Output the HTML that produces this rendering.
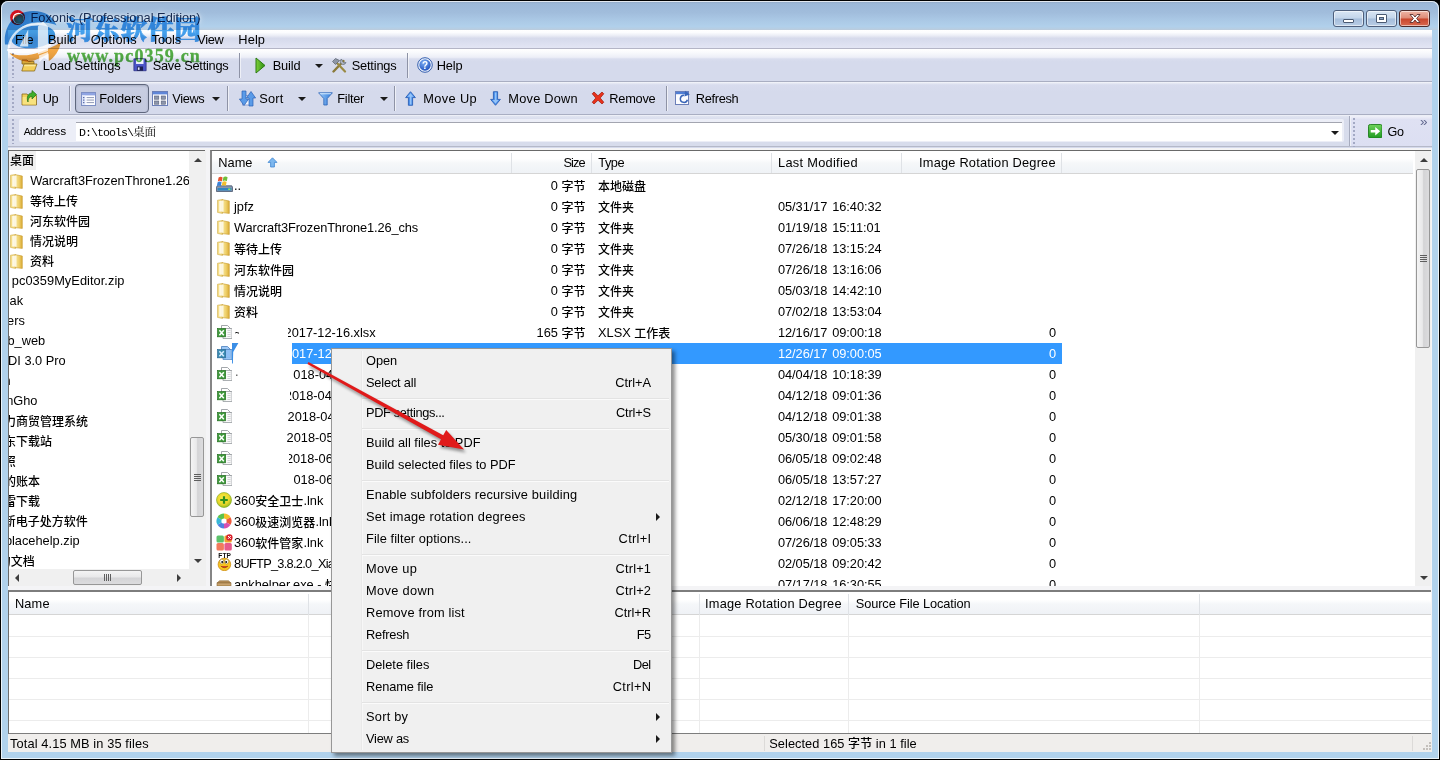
<!DOCTYPE html><html lang="zh"><head><meta charset="utf-8"><title>Foxonic (Professional Edition)</title><style>
*{box-sizing:border-box;margin:0;padding:0}
html,body{width:1440px;height:760px;overflow:hidden;background:#000}
body{position:relative;font-family:"Liberation Sans","Noto Sans CJK SC",sans-serif;font-size:12.8px;color:#000;line-height:1}
.a{position:absolute}
.t{position:absolute;white-space:nowrap;line-height:16px;height:16px}
#win{left:1px;top:1px;width:1438px;height:758px;border-radius:7px 7px 0 0;background:#b1d2ec;overflow:hidden}
#titlebar{left:0;top:0;width:1438px;height:29px;background:linear-gradient(#8fa6c2 0,#94acc9 4%,#9cb8d8 9%,#a1bddc 40%,#aac8e5 65%,#b1d0eb 88%,#b6cee4 95%,#bccbdb 100%)}
#hl{left:0;top:0;width:1438px;height:758px;border-radius:7px 7px 0 0;box-shadow:inset 0 0 0 1px rgba(255,255,255,.75)}
#client{left:7px;top:29px;width:1424px;height:722px;background:#d5daec;overflow:hidden}
.cb{position:absolute;top:10px;height:17px;border:1px solid #4e5f7c;border-radius:3px;box-shadow:inset 0 0 0 1px rgba(255,255,255,.55)}
.cbn{background:linear-gradient(#d9e6f4 0,#c3d5ea 48%,#a5bddb 52%,#b9cee6 100%)}
.cbx{background:linear-gradient(#eeb5a6 0,#de8a76 48%,#c8452c 52%,#d9694f 100%);border-color:#4b2a2a}
#menubar{left:0;top:0;width:1424px;height:19px;background:linear-gradient(#fff 0,#fbfcfe 14%,#eceef6 30%,#dcdfee 42%,#d6daeb 48%,#d9ddee 62%,#e3e5f4 100%);border-bottom:1px solid #b4b5c6}
.tb{position:absolute;left:0;width:1424px;background:linear-gradient(#fff 0,#f8f9fc 12%,#eceef7 26%,#d9ddee 31%,#d5daec 40%,#d5daec 100%)}
.sep{position:absolute;width:1px;background:#8e93a6;box-shadow:1px 0 0 rgba(255,255,255,.6)}
.grip{position:absolute;width:2px;background-image:repeating-linear-gradient(#a3a9c4 0,#a3a9c4 2px,transparent 2px,transparent 4px)}.grip:after{content:"";position:absolute;left:1px;top:1px;width:2px;height:100%;background-image:repeating-linear-gradient(#fff 0,#fff 2px,transparent 2px,transparent 4px);z-index:-1}
.dd{position:absolute;width:0;height:0;border-left:4px solid transparent;border-right:4px solid transparent;border-top:4px solid #1a1a1a}
.pane{position:absolute;background:#fff;overflow:hidden}
.hdr{position:absolute;left:0;top:0;height:22px;background:linear-gradient(#fff 0,#fff 35%,#f5f7f9 55%,#eff2f6 100%);border-bottom:1px solid #d5d5d5}
.hd{position:absolute;top:2px;width:1px;height:20px;background:#dfe2e6}
.row{position:absolute;left:0;height:21px}
.sb{position:absolute;background:#f0f0f0}
.thumb{position:absolute;border:1px solid #979797;border-radius:2px;background:linear-gradient(90deg,#f4f4f4 0,#e9e9ea 45%,#d4d4d6 55%,#dcdcde 100%)}
.thumbh{position:absolute;border:1px solid #979797;border-radius:2px;background:linear-gradient(#f4f4f4 0,#e9e9ea 45%,#d4d4d6 55%,#dcdcde 100%)}
#menu{left:331px;top:348px;width:341px;height:405px;font-size:12.8px;background:#f0f0f0;border:1px solid #979797;box-shadow:3px 3px 4px rgba(0,0,0,.45)}
.mi{position:absolute;left:34px;white-space:nowrap;line-height:16px}
.mk{position:absolute;right:20px;white-space:nowrap;line-height:16px;text-align:right}
.ms{position:absolute;left:30px;right:2px;height:2px;border-top:1px solid #e3e3e3;border-bottom:1px solid #fbfbfb}
.ma{position:absolute;right:11px;width:0;height:0;border-top:4px solid transparent;border-bottom:4px solid transparent;border-left:4px solid #1a1a1a}
.gl{position:absolute;left:0;height:1px;background:#ececec}
.c{font-size:12px;font-weight:500;position:relative;top:.6px}
</style></head><body>
<div id="win" class="a"><div id="titlebar" class="a"></div>
<svg class="a" style="left:8px;top:8px" width="17" height="17" viewBox="0 0 17 17">
<defs><radialGradient id="ig" cx="0.6" cy="0.65" r="0.6"><stop offset="0" stop-color="#3c8f8a"/><stop offset="0.6" stop-color="#7a6a5a"/><stop offset="1" stop-color="#c9482e"/></radialGradient></defs>
<circle cx="8.5" cy="8.5" r="7.4" fill="#d3101f"/><circle cx="9.3" cy="9.3" r="5.6" fill="#fff"/><circle cx="9.8" cy="9.8" r="4.9" fill="url(#ig)"/></svg>
<div class="t" style="left:29.5px;top:9.3px;letter-spacing:0px;font-size:12.8px;color:#15294f;text-shadow:0 0 6px rgba(255,255,255,.9),0 0 3px rgba(255,255,255,.8)">Foxonic (Professional Edition)</div>
<div class="cb cbn" style="left:1332px;width:31px;top:9px"><div class="a" style="left:9px;top:8px;width:11px;height:4px;background:#fff;border:1px solid #4a5a72;border-radius:1px"></div></div>
<div class="cb cbn" style="left:1365px;width:31px;top:9px"><div class="a" style="left:9px;top:3px;width:11px;height:9px;background:#fff;border:1px solid #4a5a72;border-radius:1px"><div class="a" style="left:2px;top:2px;width:5px;height:3px;background:#8ba3c4;border:1px solid #4a5a72"></div></div></div>
<div class="cb cbx" style="left:1398px;width:31px;top:9px"><svg class="a" style="left:8px;top:2px" width="14" height="11" viewBox="0 0 14 11"><path d="M2 1.5 L5 1.5 L7 4 L9 1.5 L12 1.5 L8.6 5.5 L12 9.5 L9 9.5 L7 7 L5 9.5 L2 9.5 L5.4 5.5 Z" fill="#fff" stroke="#5a3030" stroke-width="0.9" stroke-linejoin="round"/></svg></div>
<div id="client" class="a">
<div id="menubar" class="a"></div>
<div class="t" style="top:2px;letter-spacing:-0.708px;left:7px;">File</div>
<div class="t" style="top:2px;letter-spacing:0.059px;left:40px;">Build</div>
<div class="t" style="top:2px;letter-spacing:0.315px;left:82.7px;">Options</div>
<div class="t" style="top:2px;letter-spacing:-0.075px;left:143.7px;">Tools</div>
<div class="t" style="top:2px;letter-spacing:-0.348px;left:189.3px;">View</div>
<div class="t" style="top:2px;letter-spacing:0.125px;left:230.3px;">Help</div>
<div class="tb" style="top:19px;height:33px;border-bottom:1px solid #a9aec2"></div>
<div class="grip" style="left:4px;top:23px;height:25px"></div>
<svg class="a" style="left:13px;top:27px" width="17" height="16" viewBox="0 0 17 16"><path d="M1 3h5l1.5 1.5H13V7H1z" fill="#d9a93a" stroke="#8a6a1c" stroke-width=".8"/><path d="M3 7h13l-2.5 7H0.8z" fill="#f3cf5a" stroke="#8a6a1c" stroke-width=".8"/><path d="M3.6 7.8h11.2l-.5 1.4H3z" fill="#fbe89a"/></svg>
<div class="t" style="top:28px;letter-spacing:-0.023px;left:34.7px;">Load Settings</div>
<svg class="a" style="left:125px;top:28.2px" width="14" height="13.6" viewBox="0 0 16 16" preserveAspectRatio="none"><path d="M1 1h12.5L15 2.5V15H1z" fill="#4b55c8" stroke="#23277a" stroke-width=".8"/><rect x="3.5" y="1.4" width="8.5" height="5.6" fill="#f2f4ff"/><rect x="4.5" y="10" width="7" height="5" fill="#1c1f52"/><rect x="5.5" y="11" width="2" height="3" fill="#dfe3ff"/></svg>
<div class="t" style="top:28px;letter-spacing:-0.248px;left:144.7px;">Save Settings</div>
<div class="sep" style="left:231px;top:23px;height:25px"></div>
<svg class="a" style="left:247px;top:26.5px" width="11" height="17" viewBox="0 0 11 17"><defs><linearGradient id="pg" x1="0" x2="1"><stop offset="0" stop-color="#7ed03a"/><stop offset="1" stop-color="#2b8d12"/></linearGradient></defs><path d="M1 1 L10 8.5 L1 16 Z" fill="url(#pg)" stroke="#2a7a10" stroke-width="1" stroke-linejoin="round"/></svg>
<div class="t" style="top:28px;letter-spacing:-0.116px;left:264.7px;">Build</div>
<div class="dd" style="left:307px;top:34px"></div>
<svg class="a" style="left:323px;top:27px" width="17" height="16" viewBox="0 0 17 16"><path d="M2.5 14.5 L12.5 4" stroke="#8a7a3a" stroke-width="2.4" stroke-linecap="round"/><path d="M14 14.5 L5 5" stroke="#9a8a44" stroke-width="2.2" stroke-linecap="round"/><path d="M1.5 4.5 L4.5 1.5 L8.5 3.5 L4.5 7.5 Z" fill="#8d96a6" stroke="#59606c" stroke-width=".7"/><path d="M10.5 2 a3 3 0 1 0 4.5 3.5 l-2 .3 -1.4 -1.4z" fill="#aeb6c4" stroke="#5c6470" stroke-width=".7"/></svg>
<div class="t" style="top:28px;letter-spacing:-0.179px;left:343.7px;">Settings</div>
<div class="sep" style="left:399px;top:23px;height:25px"></div>
<svg class="a" style="left:408.5px;top:27px" width="16" height="16" viewBox="0 0 16 16"><defs><radialGradient id="hg" cx=".4" cy=".3" r=".8"><stop offset="0" stop-color="#7fb1f5"/><stop offset="1" stop-color="#1748b8"/></radialGradient></defs><circle cx="8" cy="8" r="7.3" fill="#eef3fb" stroke="#355fae" stroke-width="1"/><circle cx="8" cy="8" r="5.7" fill="url(#hg)"/><text x="8" y="11.6" font-family="Liberation Sans,sans-serif" font-weight="bold" font-size="10" text-anchor="middle" fill="#fff">?</text></svg>
<div class="t" style="top:28px;letter-spacing:-0.108px;left:428.7px;">Help</div>
<div class="tb" style="top:52px;height:33px;border-bottom:1px solid #a9aec2;background:linear-gradient(#f6f7fb 0,#e6e9f4 4%,#d8dcee 9%,#d5daec 30%,#d5daec 100%)"></div>
<div class="grip" style="left:4px;top:56px;height:25px"></div>
<svg class="a" style="left:13px;top:60px" width="17" height="16" viewBox="0 0 17 16"><path d="M1 4h5l1.5 1.5H15.5V15H1z" fill="#f1cf5a" stroke="#8a6a1c" stroke-width=".8"/><path d="M1.6 7h13.4v7.4H1.6z" fill="#f8e27e"/><path d="M7 12 C7 8 9 6.5 11 6.5 L11 9 L15.5 4.5 L11 0.5 L11 3 C7.5 3 5 6.5 7 12z" fill="#3fae2a" stroke="#1f6e12" stroke-width=".7"/></svg>
<div class="t" style="top:60.7px;letter-spacing:-0.363px;left:34.7px;">Up</div>
<div class="sep" style="left:61px;top:56px;height:25px"></div>
<div class="a" style="left:67px;top:54px;width:74px;height:29px;border:1px solid #5f677d;border-radius:4px;background:linear-gradient(#c9cee2 0,#c3c9de 100%);box-shadow:inset 0 1px 2px rgba(60,70,100,.25)"></div>
<svg class="a" style="left:73px;top:61.5px" width="15" height="14" viewBox="0 0 15 14"><rect x=".5" y=".5" width="14" height="13" fill="#fdfdff" stroke="#7d8fc4"/><rect x="1" y="1" width="13" height="2.4" fill="#8fa4e2"/><rect x="1" y="3.4" width="3.4" height="9.6" fill="#dfe6fa"/><g fill="#5b6da8"><rect x="2" y="5" width="1.4" height="1.2"/><rect x="2" y="7.5" width="1.4" height="1.2"/><rect x="2" y="10" width="1.4" height="1.2"/></g><g fill="#9aa3bd"><rect x="5.6" y="5" width="7.4" height="1.1"/><rect x="5.6" y="7.5" width="7.4" height="1.1"/><rect x="5.6" y="10" width="7.4" height="1.1"/></g></svg>
<div class="t" style="top:61.2px;letter-spacing:-0.047px;left:91.3px;">Folders</div>
<svg class="a" style="left:144px;top:60.5px" width="16" height="15" viewBox="0 0 16 15"><rect x=".5" y=".5" width="15" height="14" fill="#fdfdff" stroke="#6b7fb8"/><rect x="1" y="1" width="14" height="2.4" fill="#5f86d8"/><g fill="#8e97ad" stroke="#555d75" stroke-width=".6"><rect x="2.6" y="5" width="4.2" height="3.2"/><rect x="9.2" y="5" width="4.2" height="3.2"/><rect x="2.6" y="10" width="4.2" height="3.2"/><rect x="9.2" y="10" width="4.2" height="3.2"/></g></svg>
<div class="t" style="top:60.7px;letter-spacing:-0.361px;left:164.3px;">Views</div>
<div class="dd" style="left:203.5px;top:67px"></div>
<div class="sep" style="left:218.5px;top:56px;height:25px"></div>
<svg class="a" style="left:230.5px;top:59.5px" width="17" height="17" viewBox="0 0 17 17"><rect x="3.5" y="5.5" width="10" height="9.5" fill="#f4f7fd" stroke="#7f93c8" stroke-width=".8"/><path d="M3 1h4v8h2.6L5 15.5 0.4 9H3z" fill="#5a9be8" stroke="#2a5fb4" stroke-width=".7"/><path d="M10 16v-8H7.4L12 1.5 16.6 8H14v8z" fill="#5a9be8" stroke="#2a5fb4" stroke-width=".7"/></svg>
<div class="t" style="top:60.7px;letter-spacing:0.175px;left:251.3px;">Sort</div>
<div class="dd" style="left:289.5px;top:67px"></div>
<svg class="a" style="left:310px;top:61.5px" width="15" height="14" viewBox="0 0 15 14"><defs><linearGradient id="fg" x1="0" x2="1"><stop offset="0" stop-color="#9ccaf8"/><stop offset="1" stop-color="#2e78d8"/></linearGradient></defs><path d="M.6 .8h13.8L9.2 6.6V13H5.8V6.6z" fill="url(#fg)" stroke="#2a63b8" stroke-width=".8" stroke-linejoin="round"/><path d="M1.5 1.3h12l-1 1H2.5z" fill="#d9ecff"/></svg>
<div class="t" style="top:60.7px;letter-spacing:-0.289px;left:329.3px;">Filter</div>
<div class="dd" style="left:372px;top:67px"></div>
<div class="sep" style="left:386px;top:56px;height:25px"></div>
<svg class="a" style="left:396.5px;top:60.5px" width="11" height="15" viewBox="0 0 11 15"><path d="M5.5 .7 L10.4 6.6 H7.6 V14.3 H3.4 V6.6 H.6 Z" fill="#4f94ec" stroke="#1f55b0" stroke-width=".8" stroke-linejoin="round"/><path d="M5.5 2.2 L8.4 5.8 H6.4 V13.4 H5 V5.8 H2.6z" fill="#a8d0fb" opacity=".8"/></svg>
<div class="t" style="top:60.7px;letter-spacing:0.363px;left:415.3px;">Move Up</div>
<svg class="a" style="left:482px;top:60.5px" width="11" height="15" viewBox="0 0 11 15"><path d="M5.5 14.3 L10.4 8.4 H7.6 V.7 H3.4 V8.4 H.6 Z" fill="#4f94ec" stroke="#1f55b0" stroke-width=".8" stroke-linejoin="round"/><path d="M5 1.5 H6.4 V9 H8.4 L5.5 12.6 2.6 9 H5z" fill="#a8d0fb" opacity=".8"/></svg>
<div class="t" style="top:60.7px;letter-spacing:0.227px;left:500.3px;">Move Down</div>
<svg class="a" style="left:583px;top:61px" width="14" height="14" viewBox="0 0 14 14"><path d="M1.2 2.8 L3 1 L7 4.8 L11 1 L12.8 2.8 L9.2 7 L12.8 11.2 L11 13 L7 9.2 L3 13 L1.2 11.2 L4.8 7 Z" fill="#e8321c" stroke="#a01808" stroke-width=".7" stroke-linejoin="round"/></svg>
<div class="t" style="top:60.7px;letter-spacing:-0.253px;left:601.3px;">Remove</div>
<div class="sep" style="left:658px;top:56px;height:25px"></div>
<svg class="a" style="left:667px;top:60px" width="16" height="15" viewBox="0 0 16 15"><rect x=".5" y="1.5" width="13" height="13" fill="#fdfdff" stroke="#6b7fb8"/><rect x="1" y="2" width="12" height="2.2" fill="#4f7ed4"/><path d="M9 5.2 a3.6 3.6 0 1 0 3.4 4.6" fill="none" stroke="#3a66b8" stroke-width="1.5"/><path d="M10 .8 L14.8 4.4 L9.4 6.4z" fill="#3a66b8"/></svg>
<div class="t" style="top:60.7px;letter-spacing:-0.303px;left:687.7px;">Refresh</div>
<div class="tb" style="top:85px;height:32px;border-bottom:1px solid #b5b9c9;background:linear-gradient(#f4f5fa 0,#dfe3f0 5%,#d8dcec 14%,#d7dcec 100%)"></div>
<div class="grip" style="left:4px;top:89px;height:25px"></div>
<div class="a" style="left:11px;top:89.3px;width:1324.5px;height:23.2px;background:#eceef7;border-radius:2px"></div>
<div class="a" style="left:68px;top:92px;width:1266px;height:19.2px;background:#fff;border-top:1px solid #a3a5b0"></div>
<div class="sep" style="left:1341px;top:86px;height:30px;background:#a6abbe"></div>
<div class="t" style="left:15.8px;top:94.3px;font-family:'Liberation Mono','Noto Sans CJK SC',monospace;font-size:11.6px;letter-spacing:-0.96px;">Address</div>
<div class="t" style="left:71px;top:93px;font-family:'Liberation Mono','Noto Sans CJK SC',monospace;font-size:11.6px;letter-spacing:-0.96px;">D:\tools\<span style="letter-spacing:0;font-family:'Noto Serif CJK SC',serif">桌面</span></div>
<div class="dd" style="left:1322.7px;top:101px"></div>
<div class="a" style="left:1343px;top:86px;width:81px;height:30px;background:linear-gradient(#f0f1f9 0,#dfe1f3 12%,#dcdff2 100%)"></div>
<div class="grip" style="left:1345px;top:87.5px;height:29px"></div>
<svg class="a" style="left:1359.8px;top:93.8px" width="14.5" height="14.5" viewBox="0 0 16 16"><defs><linearGradient id="gg" x1="0" y1="0" x2="0" y2="1"><stop offset="0" stop-color="#6fd35a"/><stop offset="1" stop-color="#1f9a22"/></linearGradient></defs><rect x=".5" y=".5" width="15" height="15" rx="2" fill="url(#gg)" stroke="#1d7a1c"/><path d="M3 6.6h5V3.4L13.4 8 8 12.6V9.4H3z" fill="#fff"/></svg>
<div class="t" style="top:94px;font-size:12.6px;letter-spacing:-0.208px;left:1379.5px;">Go</div>
<div class="t" style="left:1412px;top:84px;font-size:13.5px;color:#62688f;letter-spacing:-1px">»</div>
<div class="a" style="left:0;top:118px;width:1424px;height:604px;background:#f4f4f6"></div>
<div class="pane" style="left:0px;top:120px;width:197px;height:436px;border-top:1px solid #6a6a6a;border-left:1px solid #6a6a6a">
<div class="a" style="left:0px;top:0px;width:27px;height:19px;background:#f0f0f0"></div>
<div class="t" style="top:1.5px;left:1px;"><span class="c">桌面</span></div>
<svg class="a" style="left:0.8px;top:22.5px" width="13" height="15" viewBox="0 0 13 15"><defs><linearGradient id="fo1" x1="0" x2="1"><stop offset="0" stop-color="#f7e7a2"/><stop offset=".55" stop-color="#efd06a"/><stop offset="1" stop-color="#d9aa35"/></linearGradient></defs><path d="M.5 1.2 L5.5 .5 V14.5 L.5 13.4z" fill="#f4dc86" stroke="#d2b04e" stroke-width=".6"/><path d="M5 .6 L12.3 2 V14.4 L5 13.6z" fill="url(#fo1)" stroke="#c79a2e" stroke-width=".6"/><path d="M2.2 2 L6.5 1.4 V12.8 L2.2 12.4z" fill="#fffdf2" opacity=".85"/></svg>
<div class="t" style="top:22.0px;letter-spacing:-0.022px;left:21.2px;">Warcraft3FrozenThrone1.26_chs</div>
<svg class="a" style="left:0.8px;top:42.5px" width="13" height="15" viewBox="0 0 13 15"><defs><linearGradient id="fo2" x1="0" x2="1"><stop offset="0" stop-color="#f7e7a2"/><stop offset=".55" stop-color="#efd06a"/><stop offset="1" stop-color="#d9aa35"/></linearGradient></defs><path d="M.5 1.2 L5.5 .5 V14.5 L.5 13.4z" fill="#f4dc86" stroke="#d2b04e" stroke-width=".6"/><path d="M5 .6 L12.3 2 V14.4 L5 13.6z" fill="url(#fo2)" stroke="#c79a2e" stroke-width=".6"/><path d="M2.2 2 L6.5 1.4 V12.8 L2.2 12.4z" fill="#fffdf2" opacity=".85"/></svg>
<div class="t" style="top:42.0px;left:21px;"><span class="c">等待上传</span></div>
<svg class="a" style="left:0.8px;top:62.5px" width="13" height="15" viewBox="0 0 13 15"><defs><linearGradient id="fo3" x1="0" x2="1"><stop offset="0" stop-color="#f7e7a2"/><stop offset=".55" stop-color="#efd06a"/><stop offset="1" stop-color="#d9aa35"/></linearGradient></defs><path d="M.5 1.2 L5.5 .5 V14.5 L.5 13.4z" fill="#f4dc86" stroke="#d2b04e" stroke-width=".6"/><path d="M5 .6 L12.3 2 V14.4 L5 13.6z" fill="url(#fo3)" stroke="#c79a2e" stroke-width=".6"/><path d="M2.2 2 L6.5 1.4 V12.8 L2.2 12.4z" fill="#fffdf2" opacity=".85"/></svg>
<div class="t" style="top:62.0px;left:21px;"><span class="c">河东软件园</span></div>
<svg class="a" style="left:0.8px;top:82.5px" width="13" height="15" viewBox="0 0 13 15"><defs><linearGradient id="fo4" x1="0" x2="1"><stop offset="0" stop-color="#f7e7a2"/><stop offset=".55" stop-color="#efd06a"/><stop offset="1" stop-color="#d9aa35"/></linearGradient></defs><path d="M.5 1.2 L5.5 .5 V14.5 L.5 13.4z" fill="#f4dc86" stroke="#d2b04e" stroke-width=".6"/><path d="M5 .6 L12.3 2 V14.4 L5 13.6z" fill="url(#fo4)" stroke="#c79a2e" stroke-width=".6"/><path d="M2.2 2 L6.5 1.4 V12.8 L2.2 12.4z" fill="#fffdf2" opacity=".85"/></svg>
<div class="t" style="top:82.0px;left:21px;"><span class="c">情况说明</span></div>
<svg class="a" style="left:0.8px;top:102.5px" width="13" height="15" viewBox="0 0 13 15"><defs><linearGradient id="fo5" x1="0" x2="1"><stop offset="0" stop-color="#f7e7a2"/><stop offset=".55" stop-color="#efd06a"/><stop offset="1" stop-color="#d9aa35"/></linearGradient></defs><path d="M.5 1.2 L5.5 .5 V14.5 L.5 13.4z" fill="#f4dc86" stroke="#d2b04e" stroke-width=".6"/><path d="M5 .6 L12.3 2 V14.4 L5 13.6z" fill="url(#fo5)" stroke="#c79a2e" stroke-width=".6"/><path d="M2.2 2 L6.5 1.4 V12.8 L2.2 12.4z" fill="#fffdf2" opacity=".85"/></svg>
<div class="t" style="top:102.0px;left:21px;"><span class="c">资料</span></div>
<div class="t" style="top:122.0px;letter-spacing:0.058px;left:2.8px;">pc0359MyEditor.zip</div>
<div class="t" style="top:142.0px;right:181.9px;text-align:right;">bak</div>
<div class="t" style="top:162.0px;right:180.2px;text-align:right;">Users</div>
<div class="t" style="top:182.0px;right:159.8px;text-align:right;">web_web</div>
<div class="t" style="top:202.0px;right:139.3px;text-align:right;">MIDI 3.0 Pro</div>
<div class="t" style="top:222.0px;right:194.5px;text-align:right;">bin</div>
<div class="t" style="top:242.0px;right:167.5px;text-align:right;">WinGho</div>
<div class="t" style="top:262.0px;right:117px;text-align:right;"><span class="c">智力商贸管理系统</span></div>
<div class="t" style="top:282.0px;right:153px;text-align:right;"><span class="c">河东下载站</span></div>
<div class="t" style="top:302.0px;right:189.2px;text-align:right;"><span class="c">证照</span></div>
<div class="t" style="top:322.0px;right:164.9px;text-align:right;"><span class="c">我的账本</span></div>
<div class="t" style="top:342.0px;right:164.9px;text-align:right;"><span class="c">迅雷下载</span></div>
<div class="t" style="top:362.0px;right:117.2px;text-align:right;"><span class="c">易新电子处方软件</span></div>
<div class="t" style="top:382.0px;right:125.4px;text-align:right;">replacehelp.zip</div>
<div class="t" style="top:402.0px;right:170.3px;text-align:right;"><span class="c">我的文档</span></div>
</div>
<div class="sb" style="left:181px;top:121px;width:16.5px;height:418px"><div class="a" style="left:5px;top:7px;width:0;height:0;border-left:4px solid transparent;border-right:4px solid transparent;border-bottom:4px solid #3d3d3d"></div><div class="a" style="left:5px;top:408px;width:0;height:0;border-left:4px solid transparent;border-right:4px solid transparent;border-top:4px solid #3d3d3d"></div><div class="thumb" style="left:1px;top:286px;width:14.0px;height:80px"></div><div class="a" style="left:5px;top:322.5px;width:7px;height:1px;background:#5e5e5e"></div><div class="a" style="left:5px;top:324.5px;width:7px;height:1px;background:#5e5e5e"></div><div class="a" style="left:5px;top:326.5px;width:7px;height:1px;background:#5e5e5e"></div><div class="a" style="left:5px;top:328.5px;width:7px;height:1px;background:#5e5e5e"></div></div>
<div class="sb" style="left:1px;top:539px;width:180px;height:17px">
<div class="a" style="left:6px;top:5px;width:0;height:0;border-top:4px solid transparent;border-bottom:4px solid transparent;border-right:4px solid #3d3d3d"></div>
<div class="a" style="left:168px;top:5px;width:0;height:0;border-top:4px solid transparent;border-bottom:4px solid transparent;border-left:4px solid #3d3d3d"></div>
<div class="thumbh" style="left:64px;top:1px;width:69px;height:15px"></div>
<div class="a" style="left:95px;top:5px;width:1px;height:7px;background:#5e5e5e"></div>
<div class="a" style="left:97px;top:5px;width:1px;height:7px;background:#5e5e5e"></div>
<div class="a" style="left:99px;top:5px;width:1px;height:7px;background:#5e5e5e"></div>
<div class="a" style="left:101px;top:5px;width:1px;height:7px;background:#5e5e5e"></div>
</div>
<div class="sb" style="left:181px;top:539px;width:16.5px;height:17px"></div>
<div class="pane" style="left:202px;top:120px;width:1221px;height:436px;border-top:1px solid #6a6a6a;border-left:2px solid #858585">
<div class="hdr" style="width:1201px;height:23px"></div>
<div class="hd" style="left:298.6px"></div>
<div class="hd" style="left:379.2px"></div>
<div class="hd" style="left:559px"></div>
<div class="hd" style="left:689px"></div>
<div class="hd" style="left:849px"></div>
<div class="t" style="top:4px;letter-spacing:0.019px;left:6.3px;">Name</div>
<svg class="a" style="left:55px;top:6px" width="11" height="11" viewBox="0 0 11 11"><path d="M5.5 .8 L10 5.4 H7.4 V10 H3.6 V5.4 H1 Z" fill="#7db7ee" stroke="#3f86d2" stroke-width=".8" stroke-linejoin="round"/></svg>
<div class="t" style="top:4px;letter-spacing:-0.967px;left:351.5px;">Size</div>
<div class="t" style="top:4px;letter-spacing:-0.485px;left:386.3px;">Type</div>
<div class="t" style="top:4px;letter-spacing:0.289px;left:566px;">Last Modified</div>
<div class="t" style="top:4px;letter-spacing:0.213px;left:707px;">Image Rotation Degree</div>
<svg class="a" style="left:3.5px;top:25.4px" width="17" height="17" viewBox="0 0 17 17"><path d="M1.2 9.8h14.6l.7 1.4v4.3H.5v-4.3z" fill="#8696ae" stroke="#4a5870" stroke-width=".8"/><rect x="1.6" y="12" width="13.8" height="2.6" rx=".6" fill="#2f86c0"/><rect x="12.2" y="12.5" width="2.2" height="1.5" fill="#8aea5a"/><path d="M2.6 1.4 q2 -1.3 4 0 l-.8 4 q-2 -1.3 -4 0z" fill="#e8502c"/><path d="M7.4 1.2 q2 -1.5 4.2 0 l-.8 4 q-2.2 -1.5 -4.2 0z" fill="#6fbf3a"/><path d="M1.6 6.2 q2 -1.3 4 0 l-.8 4 q-2 -1.3 -4 0z" fill="#3a82d8"/><path d="M6.4 6 q2 -1.5 4.2 0 l-.8 4 q-2.2 -1.5 -4.2 0z" fill="#f2c02e"/></svg>
<div class="t" style="top:27px;left:22px;">..</div>
<div class="t" style="top:27px;right:845.5px;text-align:right;">0 <span class="c">字节</span></div>
<div class="t" style="top:27px;left:386px;"><span class="c">本地磁盘</span></div>
<svg class="a" style="left:5px;top:47.7px" width="13" height="15" viewBox="0 0 13 15"><defs><linearGradient id="fo6" x1="0" x2="1"><stop offset="0" stop-color="#f7e7a2"/><stop offset=".55" stop-color="#efd06a"/><stop offset="1" stop-color="#d9aa35"/></linearGradient></defs><path d="M.5 1.2 L5.5 .5 V14.5 L.5 13.4z" fill="#f4dc86" stroke="#d2b04e" stroke-width=".6"/><path d="M5 .6 L12.3 2 V14.4 L5 13.6z" fill="url(#fo6)" stroke="#c79a2e" stroke-width=".6"/><path d="M2.2 2 L6.5 1.4 V12.8 L2.2 12.4z" fill="#fffdf2" opacity=".85"/></svg>
<div class="t" style="top:48px;left:22px;">jpfz</div>
<div class="t" style="top:48px;right:845.5px;text-align:right;">0 <span class="c">字节</span></div>
<div class="t" style="top:48px;left:386px;"><span class="c">文件夹</span></div>
<div class="t" style="top:48px;letter-spacing:-0.069px;left:566px;word-spacing:1.5px;">05/31/17 16:40:32</div>
<svg class="a" style="left:5px;top:68.7px" width="13" height="15" viewBox="0 0 13 15"><defs><linearGradient id="fo7" x1="0" x2="1"><stop offset="0" stop-color="#f7e7a2"/><stop offset=".55" stop-color="#efd06a"/><stop offset="1" stop-color="#d9aa35"/></linearGradient></defs><path d="M.5 1.2 L5.5 .5 V14.5 L.5 13.4z" fill="#f4dc86" stroke="#d2b04e" stroke-width=".6"/><path d="M5 .6 L12.3 2 V14.4 L5 13.6z" fill="url(#fo7)" stroke="#c79a2e" stroke-width=".6"/><path d="M2.2 2 L6.5 1.4 V12.8 L2.2 12.4z" fill="#fffdf2" opacity=".85"/></svg>
<div class="t" style="top:69px;letter-spacing:-0.111px;left:22px;">Warcraft3FrozenThrone1.26_chs</div>
<div class="t" style="top:69px;right:845.5px;text-align:right;">0 <span class="c">字节</span></div>
<div class="t" style="top:69px;left:386px;"><span class="c">文件夹</span></div>
<div class="t" style="top:69px;letter-spacing:-0.069px;left:566px;word-spacing:1.5px;">01/19/18 15:11:01</div>
<svg class="a" style="left:5px;top:89.7px" width="13" height="15" viewBox="0 0 13 15"><defs><linearGradient id="fo8" x1="0" x2="1"><stop offset="0" stop-color="#f7e7a2"/><stop offset=".55" stop-color="#efd06a"/><stop offset="1" stop-color="#d9aa35"/></linearGradient></defs><path d="M.5 1.2 L5.5 .5 V14.5 L.5 13.4z" fill="#f4dc86" stroke="#d2b04e" stroke-width=".6"/><path d="M5 .6 L12.3 2 V14.4 L5 13.6z" fill="url(#fo8)" stroke="#c79a2e" stroke-width=".6"/><path d="M2.2 2 L6.5 1.4 V12.8 L2.2 12.4z" fill="#fffdf2" opacity=".85"/></svg>
<div class="t" style="top:90px;left:22px;"><span class="c">等待上传</span></div>
<div class="t" style="top:90px;right:845.5px;text-align:right;">0 <span class="c">字节</span></div>
<div class="t" style="top:90px;left:386px;"><span class="c">文件夹</span></div>
<div class="t" style="top:90px;letter-spacing:-0.069px;left:566px;word-spacing:1.5px;">07/26/18 13:15:24</div>
<svg class="a" style="left:5px;top:110.7px" width="13" height="15" viewBox="0 0 13 15"><defs><linearGradient id="fo9" x1="0" x2="1"><stop offset="0" stop-color="#f7e7a2"/><stop offset=".55" stop-color="#efd06a"/><stop offset="1" stop-color="#d9aa35"/></linearGradient></defs><path d="M.5 1.2 L5.5 .5 V14.5 L.5 13.4z" fill="#f4dc86" stroke="#d2b04e" stroke-width=".6"/><path d="M5 .6 L12.3 2 V14.4 L5 13.6z" fill="url(#fo9)" stroke="#c79a2e" stroke-width=".6"/><path d="M2.2 2 L6.5 1.4 V12.8 L2.2 12.4z" fill="#fffdf2" opacity=".85"/></svg>
<div class="t" style="top:111px;left:22px;"><span class="c">河东软件园</span></div>
<div class="t" style="top:111px;right:845.5px;text-align:right;">0 <span class="c">字节</span></div>
<div class="t" style="top:111px;left:386px;"><span class="c">文件夹</span></div>
<div class="t" style="top:111px;letter-spacing:-0.069px;left:566px;word-spacing:1.5px;">07/26/18 13:16:06</div>
<svg class="a" style="left:5px;top:131.7px" width="13" height="15" viewBox="0 0 13 15"><defs><linearGradient id="fo10" x1="0" x2="1"><stop offset="0" stop-color="#f7e7a2"/><stop offset=".55" stop-color="#efd06a"/><stop offset="1" stop-color="#d9aa35"/></linearGradient></defs><path d="M.5 1.2 L5.5 .5 V14.5 L.5 13.4z" fill="#f4dc86" stroke="#d2b04e" stroke-width=".6"/><path d="M5 .6 L12.3 2 V14.4 L5 13.6z" fill="url(#fo10)" stroke="#c79a2e" stroke-width=".6"/><path d="M2.2 2 L6.5 1.4 V12.8 L2.2 12.4z" fill="#fffdf2" opacity=".85"/></svg>
<div class="t" style="top:132px;left:22px;"><span class="c">情况说明</span></div>
<div class="t" style="top:132px;right:845.5px;text-align:right;">0 <span class="c">字节</span></div>
<div class="t" style="top:132px;left:386px;"><span class="c">文件夹</span></div>
<div class="t" style="top:132px;letter-spacing:-0.069px;left:566px;word-spacing:1.5px;">05/03/18 14:42:10</div>
<svg class="a" style="left:5px;top:152.7px" width="13" height="15" viewBox="0 0 13 15"><defs><linearGradient id="fo11" x1="0" x2="1"><stop offset="0" stop-color="#f7e7a2"/><stop offset=".55" stop-color="#efd06a"/><stop offset="1" stop-color="#d9aa35"/></linearGradient></defs><path d="M.5 1.2 L5.5 .5 V14.5 L.5 13.4z" fill="#f4dc86" stroke="#d2b04e" stroke-width=".6"/><path d="M5 .6 L12.3 2 V14.4 L5 13.6z" fill="url(#fo11)" stroke="#c79a2e" stroke-width=".6"/><path d="M2.2 2 L6.5 1.4 V12.8 L2.2 12.4z" fill="#fffdf2" opacity=".85"/></svg>
<div class="t" style="top:153px;left:22px;"><span class="c">资料</span></div>
<div class="t" style="top:153px;right:845.5px;text-align:right;">0 <span class="c">字节</span></div>
<div class="t" style="top:153px;left:386px;"><span class="c">文件夹</span></div>
<div class="t" style="top:153px;letter-spacing:-0.069px;left:566px;word-spacing:1.5px;">07/02/18 13:53:04</div>
<svg class="a" style="left:4.5px;top:173.5px" width="15" height="15" viewBox="0 0 15 15"><path d="M4.5 .5h6l3 3V11.5h-9z" fill="#fff" stroke="#8c9196" stroke-width=".8"/><path d="M6 3.5h9v10H6z" fill="#fbfbfb" stroke="#8c9196" stroke-width=".8" opacity=".9"/><g stroke="#b8bcc0" stroke-width=".6"><path d="M10.5 5.5h3M10.5 7.5h3M10.5 9.5h3M10.5 11.5h3"/></g><rect x=".6" y="3.6" width="8" height="8.2" fill="#3f9a3c" stroke="#23701f" stroke-width=".7"/><path d="M2.4 5.3 L6.8 10.2 M6.8 5.3 L2.4 10.2" stroke="#fff" stroke-width="1.5"/></svg>
<div class="t" style="top:174px;left:22.5px;">~</div>
<div class="t" style="top:174px;left:72.6px;">2017-12-16.xlsx</div>
<div class="a" style="left:27px;top:171px;width:49px;height:20px;background:#fff"></div>
<div class="t" style="top:174px;right:845.5px;text-align:right;">165 <span class="c">字节</span></div>
<div class="t" style="top:174px;left:386px;">XLSX <span class="c">工作表</span></div>
<div class="t" style="top:174px;letter-spacing:-0.069px;left:566px;word-spacing:1.5px;">12/16/17 09:00:18</div>
<div class="t" style="top:174px;right:375px;text-align:right;">0</div>
<div class="a" style="left:20px;top:192px;width:829.5px;height:20.5px;background:#3399ff"></div>
<svg class="a" style="left:4.5px;top:194.5px" width="15" height="15" viewBox="0 0 15 15"><path d="M4.5 .5h6l3 3V11.5h-9z" fill="#9ec9f7" stroke="#4a7fbe" stroke-width=".8"/><path d="M6 3.5h9v10H6z" fill="#8fc0f5" stroke="#4a7fbe" stroke-width=".8" opacity=".9"/><rect x=".6" y="3.6" width="8" height="8.2" fill="#3a8bb0" stroke="#2a6a96" stroke-width=".7"/><path d="M2.4 5.3 L6.8 10.2 M6.8 5.3 L2.4 10.2" stroke="#d7ecff" stroke-width="1.5"/></svg>
<div class="t" style="top:195px;color:#fff;left:72.8px;">2017-12-26.xlsx</div>
<div class="a" style="left:26px;top:192px;width:53.5px;height:21px;background:#fff"></div>
<svg class="a" style="left:20px;top:192px" width="7" height="21" viewBox="0 0 7 21"><path d="M0 0H7V21H0z" fill="#fff"/><path d="M0 0 H6.4 L1.2 9 L.9 20.5 H0z" fill="#3a8ee6"/></svg>
<div class="t" style="top:195px;color:#fff;letter-spacing:-0.069px;left:566px;word-spacing:1.5px;">12/26/17 09:00:05</div>
<div class="t" style="top:195px;color:#fff;right:375px;text-align:right;">0</div>
<svg class="a" style="left:4.5px;top:215.5px" width="15" height="15" viewBox="0 0 15 15"><path d="M4.5 .5h6l3 3V11.5h-9z" fill="#fff" stroke="#8c9196" stroke-width=".8"/><path d="M6 3.5h9v10H6z" fill="#fbfbfb" stroke="#8c9196" stroke-width=".8" opacity=".9"/><g stroke="#b8bcc0" stroke-width=".6"><path d="M10.5 5.5h3M10.5 7.5h3M10.5 9.5h3M10.5 11.5h3"/></g><rect x=".6" y="3.6" width="8" height="8.2" fill="#3f9a3c" stroke="#23701f" stroke-width=".7"/><path d="M2.4 5.3 L6.8 10.2 M6.8 5.3 L2.4 10.2" stroke="#fff" stroke-width="1.5"/></svg>
<div class="t" style="top:213px;color:#555;left:23px;">.</div>
<div class="t" style="top:216px;left:74.2px;">2018-04-04.xlsx</div>
<div class="a" style="left:27px;top:213px;width:53.60000000000002px;height:20px;background:#fff"></div>
<div class="t" style="top:216px;right:845.5px;text-align:right;">165 <span class="c">字节</span></div>
<div class="t" style="top:216px;left:386px;">XLSX <span class="c">工作表</span></div>
<div class="t" style="top:216px;letter-spacing:-0.069px;left:566px;word-spacing:1.5px;">04/04/18 10:18:39</div>
<div class="t" style="top:216px;right:375px;text-align:right;">0</div>
<svg class="a" style="left:4.5px;top:236.5px" width="15" height="15" viewBox="0 0 15 15"><path d="M4.5 .5h6l3 3V11.5h-9z" fill="#fff" stroke="#8c9196" stroke-width=".8"/><path d="M6 3.5h9v10H6z" fill="#fbfbfb" stroke="#8c9196" stroke-width=".8" opacity=".9"/><g stroke="#b8bcc0" stroke-width=".6"><path d="M10.5 5.5h3M10.5 7.5h3M10.5 9.5h3M10.5 11.5h3"/></g><rect x=".6" y="3.6" width="8" height="8.2" fill="#3f9a3c" stroke="#23701f" stroke-width=".7"/><path d="M2.4 5.3 L6.8 10.2 M6.8 5.3 L2.4 10.2" stroke="#fff" stroke-width="1.5"/></svg>
<div class="t" style="top:237px;left:72.8px;">2018-04-12.xlsx</div>
<div class="a" style="left:27px;top:234px;width:50.5px;height:20px;background:#fff"></div>
<div class="t" style="top:237px;right:845.5px;text-align:right;">165 <span class="c">字节</span></div>
<div class="t" style="top:237px;left:386px;">XLSX <span class="c">工作表</span></div>
<div class="t" style="top:237px;letter-spacing:-0.069px;left:566px;word-spacing:1.5px;">04/12/18 09:01:36</div>
<div class="t" style="top:237px;right:375px;text-align:right;">0</div>
<svg class="a" style="left:4.5px;top:257.5px" width="15" height="15" viewBox="0 0 15 15"><path d="M4.5 .5h6l3 3V11.5h-9z" fill="#fff" stroke="#8c9196" stroke-width=".8"/><path d="M6 3.5h9v10H6z" fill="#fbfbfb" stroke="#8c9196" stroke-width=".8" opacity=".9"/><g stroke="#b8bcc0" stroke-width=".6"><path d="M10.5 5.5h3M10.5 7.5h3M10.5 9.5h3M10.5 11.5h3"/></g><rect x=".6" y="3.6" width="8" height="8.2" fill="#3f9a3c" stroke="#23701f" stroke-width=".7"/><path d="M2.4 5.3 L6.8 10.2 M6.8 5.3 L2.4 10.2" stroke="#fff" stroke-width="1.5"/></svg>
<div class="t" style="top:258px;left:75.6px;">2018-04-12.xlsx</div>
<div class="a" style="left:27px;top:255px;width:48px;height:20px;background:#fff"></div>
<div class="t" style="top:258px;right:845.5px;text-align:right;">165 <span class="c">字节</span></div>
<div class="t" style="top:258px;left:386px;">XLSX <span class="c">工作表</span></div>
<div class="t" style="top:258px;letter-spacing:-0.069px;left:566px;word-spacing:1.5px;">04/12/18 09:01:38</div>
<div class="t" style="top:258px;right:375px;text-align:right;">0</div>
<svg class="a" style="left:4.5px;top:278.5px" width="15" height="15" viewBox="0 0 15 15"><path d="M4.5 .5h6l3 3V11.5h-9z" fill="#fff" stroke="#8c9196" stroke-width=".8"/><path d="M6 3.5h9v10H6z" fill="#fbfbfb" stroke="#8c9196" stroke-width=".8" opacity=".9"/><g stroke="#b8bcc0" stroke-width=".6"><path d="M10.5 5.5h3M10.5 7.5h3M10.5 9.5h3M10.5 11.5h3"/></g><rect x=".6" y="3.6" width="8" height="8.2" fill="#3f9a3c" stroke="#23701f" stroke-width=".7"/><path d="M2.4 5.3 L6.8 10.2 M6.8 5.3 L2.4 10.2" stroke="#fff" stroke-width="1.5"/></svg>
<div class="t" style="top:279px;left:74.6px;">2018-05-30.xlsx</div>
<div class="a" style="left:27px;top:276px;width:46.60000000000002px;height:20px;background:#fff"></div>
<div class="t" style="top:279px;right:845.5px;text-align:right;">165 <span class="c">字节</span></div>
<div class="t" style="top:279px;left:386px;">XLSX <span class="c">工作表</span></div>
<div class="t" style="top:279px;letter-spacing:-0.069px;left:566px;word-spacing:1.5px;">05/30/18 09:01:58</div>
<div class="t" style="top:279px;right:375px;text-align:right;">0</div>
<svg class="a" style="left:4.5px;top:299.5px" width="15" height="15" viewBox="0 0 15 15"><path d="M4.5 .5h6l3 3V11.5h-9z" fill="#fff" stroke="#8c9196" stroke-width=".8"/><path d="M6 3.5h9v10H6z" fill="#fbfbfb" stroke="#8c9196" stroke-width=".8" opacity=".9"/><g stroke="#b8bcc0" stroke-width=".6"><path d="M10.5 5.5h3M10.5 7.5h3M10.5 9.5h3M10.5 11.5h3"/></g><rect x=".6" y="3.6" width="8" height="8.2" fill="#3f9a3c" stroke="#23701f" stroke-width=".7"/><path d="M2.4 5.3 L6.8 10.2 M6.8 5.3 L2.4 10.2" stroke="#fff" stroke-width="1.5"/></svg>
<div class="t" style="top:300px;left:73.9px;">2018-06-05.xlsx</div>
<div class="a" style="left:27px;top:297px;width:50.39999999999998px;height:20px;background:#fff"></div>
<div class="t" style="top:300px;right:845.5px;text-align:right;">165 <span class="c">字节</span></div>
<div class="t" style="top:300px;left:386px;">XLSX <span class="c">工作表</span></div>
<div class="t" style="top:300px;letter-spacing:-0.069px;left:566px;word-spacing:1.5px;">06/05/18 09:02:48</div>
<div class="t" style="top:300px;right:375px;text-align:right;">0</div>
<svg class="a" style="left:4.5px;top:320.5px" width="15" height="15" viewBox="0 0 15 15"><path d="M4.5 .5h6l3 3V11.5h-9z" fill="#fff" stroke="#8c9196" stroke-width=".8"/><path d="M6 3.5h9v10H6z" fill="#fbfbfb" stroke="#8c9196" stroke-width=".8" opacity=".9"/><g stroke="#b8bcc0" stroke-width=".6"><path d="M10.5 5.5h3M10.5 7.5h3M10.5 9.5h3M10.5 11.5h3"/></g><rect x=".6" y="3.6" width="8" height="8.2" fill="#3f9a3c" stroke="#23701f" stroke-width=".7"/><path d="M2.4 5.3 L6.8 10.2 M6.8 5.3 L2.4 10.2" stroke="#fff" stroke-width="1.5"/></svg>
<div class="t" style="top:321px;left:74.3px;">2018-06-05.xlsx</div>
<div class="a" style="left:27px;top:318px;width:53.80000000000001px;height:20px;background:#fff"></div>
<div class="t" style="top:321px;right:845.5px;text-align:right;">165 <span class="c">字节</span></div>
<div class="t" style="top:321px;left:386px;">XLSX <span class="c">工作表</span></div>
<div class="t" style="top:321px;letter-spacing:-0.069px;left:566px;word-spacing:1.5px;">06/05/18 13:57:27</div>
<div class="t" style="top:321px;right:375px;text-align:right;">0</div>
<svg class="a" style="left:4px;top:341px" width="16" height="16" viewBox="0 0 16 16"><defs><radialGradient id="sa" cx=".45" cy=".4" r=".65"><stop offset="0" stop-color="#fbf04a"/><stop offset=".6" stop-color="#e9d62a"/><stop offset="1" stop-color="#86b81e"/></radialGradient></defs><circle cx="8" cy="8" r="7.5" fill="url(#sa)" stroke="#7aa61a" stroke-width=".6"/><path d="M4.2 8h7.6M8 4.2v7.6" stroke="#2f8f1e" stroke-width="2.2"/></svg>
<div class="t" style="top:342px;left:22px;">360<span class="c">安全卫士</span>.lnk</div>
<div class="t" style="top:342px;right:845.5px;text-align:right;">1 KB</div>
<div class="t" style="top:342px;left:386px;"><span class="c">快捷方式</span></div>
<div class="t" style="top:342px;letter-spacing:-0.069px;left:566px;word-spacing:1.5px;">02/12/18 17:20:00</div>
<div class="t" style="top:342px;right:375px;text-align:right;">0</div>
<svg class="a" style="left:4px;top:362px" width="16" height="16" viewBox="0 0 16 16"><circle cx="8" cy="8" r="7.5" fill="#fff"/><path d="M8 8 L8 .5 A7.5 7.5 0 0 1 14.5 4.2z" fill="#f4c02a"/><path d="M8 8 L14.5 4.2 A7.5 7.5 0 0 1 14.5 11.8z" fill="#ee5a3c"/><path d="M8 8 L14.5 11.8 A7.5 7.5 0 0 1 8 15.5z" fill="#d64fb0"/><path d="M8 8 L8 15.5 A7.5 7.5 0 0 1 1.5 11.8z" fill="#4f7fe0"/><path d="M8 8 L1.5 11.8 A7.5 7.5 0 0 1 1.5 4.2z" fill="#38b8d8"/><path d="M8 8 L1.5 4.2 A7.5 7.5 0 0 1 8 .5z" fill="#5cc24a"/><circle cx="8" cy="8" r="2.6" fill="#fff"/></svg>
<div class="t" style="top:363px;left:22px;">360<span class="c">极速浏览器</span>.lnk</div>
<div class="t" style="top:363px;right:845.5px;text-align:right;">1 KB</div>
<div class="t" style="top:363px;left:386px;"><span class="c">快捷方式</span></div>
<div class="t" style="top:363px;letter-spacing:-0.069px;left:566px;word-spacing:1.5px;">06/06/18 12:48:29</div>
<div class="t" style="top:363px;right:375px;text-align:right;">0</div>
<svg class="a" style="left:3.5px;top:382.5px" width="17" height="17" viewBox="0 0 17 17"><rect x=".5" y="1.5" width="7.4" height="7" rx="1.5" fill="#5cc26a"/><rect x="8.4" y="1.5" width="7.4" height="7" rx="1.5" fill="#f0a42c"/><rect x=".5" y="9" width="7.4" height="7.4" rx="1.5" fill="#f27a5c"/><rect x="8.4" y="9" width="7.4" height="7.4" rx="1.5" fill="#e85a8a"/><circle cx="13.4" cy="3.4" r="3.2" fill="#d8202a"/><path d="M12 2l2.8 2.8M14.8 2L12 4.8" stroke="#fff" stroke-width="1"/></svg>
<div class="t" style="top:384px;left:22px;">360<span class="c">软件管家</span>.lnk</div>
<div class="t" style="top:384px;right:845.5px;text-align:right;">1 KB</div>
<div class="t" style="top:384px;left:386px;"><span class="c">快捷方式</span></div>
<div class="t" style="top:384px;letter-spacing:-0.069px;left:566px;word-spacing:1.5px;">07/26/18 09:05:33</div>
<div class="t" style="top:384px;right:375px;text-align:right;">0</div>
<svg class="a" style="left:3.5px;top:402px" width="17" height="18" viewBox="0 0 17 18"><circle cx="8.4" cy="11.4" r="6.3" fill="#f8c420" stroke="#c8860c" stroke-width=".7"/><ellipse cx="5.8" cy="8.6" rx="2" ry="2.3" fill="#fff" stroke="#7a5a10" stroke-width=".4"/><ellipse cx="10.6" cy="8.6" rx="2" ry="2.3" fill="#fff" stroke="#7a5a10" stroke-width=".4"/><circle cx="6.2" cy="8.9" r="1" fill="#111"/><circle cx="10.2" cy="8.9" r="1" fill="#111"/><path d="M4.8 13 q3.6 3.4 7.2 0" fill="#d84a1c" stroke="#7a2410" stroke-width=".6"/><text x="8.6" y="5.4" font-size="6.6" font-weight="bold" font-family="Liberation Sans,sans-serif" text-anchor="middle" fill="#111">FTP</text></svg>
<div class="t" style="top:405px;letter-spacing:-0.714px;left:22px;">8UFTP_3.8.2.0_XiaZaiBa.exe</div>
<div class="t" style="top:405px;right:845.5px;text-align:right;">2 MB</div>
<div class="t" style="top:405px;left:386px;"><span class="c">应用程序</span></div>
<div class="t" style="top:405px;letter-spacing:-0.069px;left:566px;word-spacing:1.5px;">02/05/18 09:20:42</div>
<div class="t" style="top:405px;right:375px;text-align:right;">0</div>
<svg class="a" style="left:4px;top:429px" width="16" height="14" viewBox="0 0 16 14"><path d="M1 3 L3.5 .8 H12.5 L15 3z" fill="#b8905a" stroke="#8a6a3a" stroke-width=".6"/><rect x="1" y="3" width="14" height="3" fill="#caa470" stroke="#8a6a3a" stroke-width=".6"/><rect x="2" y="6" width="12" height="8" fill="#e6cf9a" stroke="#a8884a" stroke-width=".6"/></svg>
<div class="t" style="top:426px;left:22px;">apkhelper.exe - <span class="c">快捷方式</span>.lnk</div>
<div class="t" style="top:426px;right:845.5px;text-align:right;">1 KB</div>
<div class="t" style="top:426px;left:386px;"><span class="c">快捷方式</span></div>
<div class="t" style="top:426px;letter-spacing:-0.069px;left:566px;word-spacing:1.5px;">07/17/18 16:30:55</div>
<div class="t" style="top:426px;right:375px;text-align:right;">0</div>
</div>
<div class="sb" style="left:1407px;top:121px;width:16px;height:435px"><div class="a" style="left:5px;top:7px;width:0;height:0;border-left:4px solid transparent;border-right:4px solid transparent;border-bottom:4px solid #3d3d3d"></div><div class="a" style="left:5px;top:425px;width:0;height:0;border-left:4px solid transparent;border-right:4px solid transparent;border-top:4px solid #3d3d3d"></div><div class="thumb" style="left:1px;top:18px;width:13.5px;height:179px"></div><div class="a" style="left:5px;top:104.0px;width:7px;height:1px;background:#5e5e5e"></div><div class="a" style="left:5px;top:106.0px;width:7px;height:1px;background:#5e5e5e"></div><div class="a" style="left:5px;top:108.0px;width:7px;height:1px;background:#5e5e5e"></div><div class="a" style="left:5px;top:110.0px;width:7px;height:1px;background:#5e5e5e"></div></div>
<div class="pane" style="left:0px;top:560px;width:1423px;height:144px;border-top:2px solid #7d7d7d;border-left:1px solid #6f6f6f;border-bottom:1px solid #7d7d7d">
<div class="hdr" style="width:1423px;height:23px"></div>
<div class="hd" style="left:299px;height:21px"></div>
<div class="a" style="left:299px;top:23px;width:1px;height:120px;background:#ececec"></div>
<div class="hd" style="left:690px;height:21px"></div>
<div class="a" style="left:690px;top:23px;width:1px;height:120px;background:#ececec"></div>
<div class="hd" style="left:839px;height:21px"></div>
<div class="a" style="left:839px;top:23px;width:1px;height:120px;background:#ececec"></div>
<div class="hd" style="left:1190px;height:21px"></div>
<div class="a" style="left:1190px;top:23px;width:1px;height:120px;background:#ececec"></div>
<div class="gl" style="top:44px;width:1423px"></div>
<div class="gl" style="top:65px;width:1423px"></div>
<div class="gl" style="top:86px;width:1423px"></div>
<div class="gl" style="top:107px;width:1423px"></div>
<div class="gl" style="top:128px;width:1423px"></div>
<div class="t" style="top:4px;letter-spacing:0.119px;left:6px;">Name</div>
<div class="t" style="top:4px;letter-spacing:0.213px;left:696px;">Image Rotation Degree</div>
<div class="t" style="top:4px;letter-spacing:-0.089px;left:846.7px;">Source File Location</div>
</div>
<div class="a" style="left:0px;top:704px;width:1424px;height:18px;background:#f0eeec"></div>
<div class="a" style="left:756px;top:706px;width:1px;height:15px;background:#dcdad8"></div>
<div class="a" style="left:1404px;top:706px;width:1px;height:15px;background:#dcdad8"></div>
<div class="t" style="top:705.5px;letter-spacing:0.112px;left:2px;">Total 4.15 MB in 35 files</div>
<div class="t" style="top:705.5px;letter-spacing:0.042px;left:761.3px;">Selected 165 <span class="c">字节</span> in 1 file</div>
<div class="a" style="left:1421px;top:718px;width:1.5px;height:1.5px;background:#c4c0bc"></div>
<div class="a" style="left:1418px;top:718px;width:1.5px;height:1.5px;background:#c4c0bc"></div>
<div class="a" style="left:1415px;top:718px;width:1.5px;height:1.5px;background:#c4c0bc"></div>
<div class="a" style="left:1421px;top:715px;width:1.5px;height:1.5px;background:#c4c0bc"></div>
<div class="a" style="left:1418px;top:715px;width:1.5px;height:1.5px;background:#c4c0bc"></div>
<div class="a" style="left:1421px;top:712px;width:1.5px;height:1.5px;background:#c4c0bc"></div>
</div>
<div id="hl" class="a"></div>
</div>
<div id="menu" class="a">
<div class="a" style="left:29px;top:2px;width:1px;height:399px;background:#e9e9e9;box-shadow:1px 0 0 #f7f7f7"></div>
<div class="mi" style="top:4px;letter-spacing:-0.038px">Open</div>
<div class="mi" style="top:26px;letter-spacing:-0.182px">Select all</div>
<div class="mk" style="top:26px;letter-spacing:-0.044px;margin-right:0.044px">Ctrl+A</div>
<div class="ms" style="top:49px"></div>
<div class="mi" style="top:56px;letter-spacing:-0.360px">PDF settings...</div>
<div class="mk" style="top:56px;letter-spacing:-0.184px;margin-right:0.184px">Ctrl+S</div>
<div class="ms" style="top:79px"></div>
<div class="mi" style="top:86px;letter-spacing:-0.002px">Build all files to PDF</div>
<div class="mi" style="top:108px;letter-spacing:0.008px">Build selected files to PDF</div>
<div class="ms" style="top:131px"></div>
<div class="mi" style="top:138px;letter-spacing:0.156px">Enable subfolders recursive building</div>
<div class="mi" style="top:160px;letter-spacing:0.232px">Set image rotation degrees</div>
<div class="ma" style="top:164px"></div>
<div class="mi" style="top:182px;letter-spacing:0.073px">File filter options...</div>
<div class="mk" style="top:182px;letter-spacing:0.292px;margin-right:-0.292px">Ctrl+I</div>
<div class="ms" style="top:205px"></div>
<div class="mi" style="top:212px;letter-spacing:0.284px">Move up</div>
<div class="mk" style="top:212px;letter-spacing:0.180px;margin-right:-0.180px">Ctrl+1</div>
<div class="mi" style="top:234px;letter-spacing:0.343px">Move down</div>
<div class="mk" style="top:234px;letter-spacing:0.180px;margin-right:-0.180px">Ctrl+2</div>
<div class="mi" style="top:256px;letter-spacing:0.179px">Remove from list</div>
<div class="mk" style="top:256px;letter-spacing:-0.025px;margin-right:0.025px">Ctrl+R</div>
<div class="mi" style="top:278px;letter-spacing:-0.220px">Refresh</div>
<div class="mk" style="top:278px;letter-spacing:-0.700px;margin-right:0.700px">F5</div>
<div class="ms" style="top:301px"></div>
<div class="mi" style="top:308px;letter-spacing:0.007px">Delete files</div>
<div class="mk" style="top:308px;letter-spacing:-0.603px;margin-right:0.603px">Del</div>
<div class="mi" style="top:330px;letter-spacing:-0.090px">Rename file</div>
<div class="mk" style="top:330px;letter-spacing:0.335px;margin-right:-0.335px">Ctrl+N</div>
<div class="ms" style="top:353px"></div>
<div class="mi" style="top:360px;letter-spacing:0.242px">Sort by</div>
<div class="ma" style="top:364px"></div>
<div class="mi" style="top:382px;letter-spacing:-0.220px">View as</div>
<div class="ma" style="top:386px"></div>
</div>
<svg class="a" style="left:290px;top:350px" width="200" height="120" viewBox="290 350 200 120">
<defs><filter id="ash" x="-10%" y="-10%" width="130%" height="140%"><feGaussianBlur stdDeviation="1.6"/></filter></defs>
<g transform="translate(2,3)" filter="url(#ash)" opacity=".4"><path d="M307.4 364.1 L308.5 362.1 L443.2 435.3 L446.2 430.0 L464 449.5 L438.0 444.8 L441.0 439.3 Z" fill="#000"/></g>
<path d="M307.4 364.1 L308.5 362.1 L443.2 435.3 L446.2 430.0 L464 449.5 L438.0 444.8 L441.0 439.3 Z" fill="#e01a1a"/></svg>
<svg class="a" style="left:2px;top:8px;mix-blend-mode:multiply;opacity:.95" width="64" height="60" viewBox="2 8 64 60">
<path d="M5,44.5 C3,27 14,11.5 33,11 C44,10.8 52.5,15.5 56.5,25.5 C52,23 44,22.2 36,22.4 C24,23 12,31 10,44.5 Z" fill="#3a97e0"/>
<ellipse cx="33" cy="36.6" rx="22.3" ry="11.6" transform="rotate(-6 33 36.6)" fill="#3a97e0"/>
<path d="M9.5,53 C18,56.5 30,56 40,52 C48,48.8 55,46 60.5,42.5 C60,50 54,58 48.8,61 L48.5,53.5 C42,57.5 36,60 29,62 C20,61 13,57.5 9.5,53 Z" fill="#f5a238"/>
</svg>
<svg class="a" style="left:2px;top:8px;opacity:.74" width="64" height="60" viewBox="2 8 64 60">
<path d="M8.8,47.5 C10,35.5 20,26.8 31,24.9 C35,24.3 38,24.1 41,24.3" fill="none" stroke="#fff" stroke-width="2.3" stroke-linecap="round"/>
<path d="M19.5,46.5 L28.2,29.5 L28.2,46.5 Z" fill="#fff"/>
<path d="M37.9,26.4 L43,21.6 L48,26.4 L48,51 L37.9,54.5 Z" fill="#fff"/>
<path d="M8,50 C20,53.5 38,52 50,45" fill="none" stroke="#fff" stroke-width="2.4" stroke-linecap="round"/><path d="M39,55.5 L48,52 L48.4,60.5 L44,57.5 L39.5,62 Z" fill="#fff"/>
</svg>
<div class="t" style="left:66.3px;top:12px;height:32px;line-height:32px;-webkit-text-stroke:.6px #44a2ee;font-family:'Noto Serif CJK SC',serif;font-weight:900;font-size:26.5px;color:#44a2ee;letter-spacing:.55px;mix-blend-mode:multiply">河东软件园</div>
<div class="t" style="left:67px;top:45px;height:22px;line-height:22px;font-family:'Liberation Serif',serif;font-weight:bold;font-size:18px;color:#55b045;letter-spacing:1.15px;-webkit-text-stroke:.3px #55b045;mix-blend-mode:multiply">www.pc0359.cn</div>
</body></html>
